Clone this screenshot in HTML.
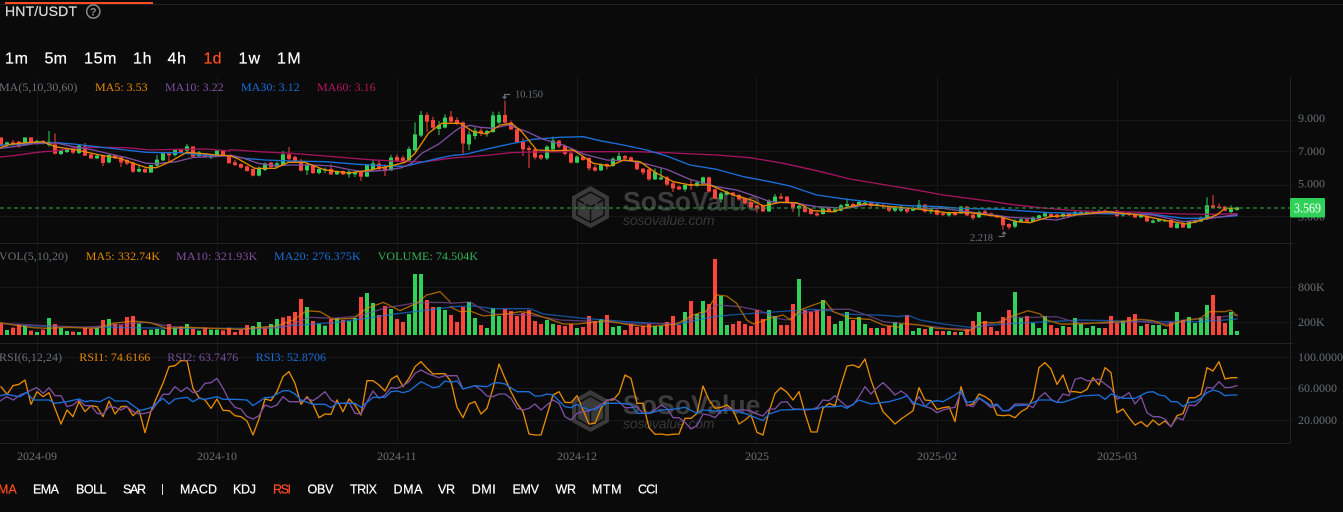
<!DOCTYPE html>
<html lang="en"><head><meta charset="utf-8"><title>HNT/USDT</title>
<style>
html,body{margin:0;padding:0;background:#0a0a0a;width:1343px;height:512px;overflow:hidden}
svg{display:block}
.s{font-family:"Liberation Serif",serif;font-size:12px}
.a{fill:#6b6f77}
.h{font-family:"Liberation Sans",sans-serif;fill:#fff;stroke:#fff;stroke-width:.2}
.tf{font-size:16px}
.ind{font-size:12.5px}
.l{fill:none;stroke-width:4;stroke-linejoin:round;stroke-linecap:round}
.o{stroke:#e68a00}.p{stroke:#7e4fa0}.b{stroke:#1a6fd8}.c{stroke:#a3145e}
.rb{fill:none;stroke:#ff453a;stroke-width:12}
.rw{fill:none;stroke:#ff453a;stroke-width:3}
.gb{fill:none;stroke:#30d158;stroke-width:12}
.gw{fill:none;stroke:#30d158;stroke-width:3}
</style></head><body>
<svg width="1343" height="512" viewBox="0 0 1343 512" xmlns="http://www.w3.org/2000/svg">
<rect width="1343" height="512" fill="#0a0a0a"/>
<!-- top -->
<rect x="0" y="4" width="1343" height="1" fill="#222"/>
<rect x="5" y="2" width="148" height="2" fill="#ff4c1f"/>
<text class="h" x="5" y="16" font-size="14" textLength="72" style="fill:#ddd;stroke:#ddd">HNT/USDT</text>
<circle cx="93.3" cy="11.5" r="6.6" fill="none" stroke="#8a8a8a" stroke-width="1.5"/>
<text x="93.3" y="15.5" text-anchor="middle" font-family="Liberation Sans,sans-serif" font-size="11" font-weight="bold" fill="#8a8a8a">?</text>
<!-- timeframes -->
<g class="h tf">
<text x="5" y="63.5" textLength="23">1m</text>
<text x="44.5" y="63.5" textLength="22.5">5m</text>
<text x="84" y="63.5" textLength="32.5">15m</text>
<text x="133" y="63.5" textLength="18.5">1h</text>
<text x="167.5" y="63.5" textLength="18.5">4h</text>
<text x="203.5" y="63.5" textLength="18" style="fill:#ff4c1f;stroke:#ff4c1f">1d</text>
<text x="238.5" y="63.5" textLength="21.5">1w</text>
<text x="277" y="63.5" textLength="23.7">1M</text>
</g>
<!-- grid -->
<g fill="none" stroke="#171717" stroke-width="1">
<path d="M0 120.5H1293M0 151.5H1293M0 185.5H1293M0 216.5H1293M0 287.5H1293M0 322.5H1293M0 357.5H1293M0 388.5H1293M0 420.5H1293"/>
<path d="M37.5 77V443M217.5 77V443M397.5 77V443M577.5 77V443M756.5 77V443M937.5 77V443M1117.5 77V443"/>
</g>
<g fill="none" stroke="#232323" stroke-width="1">
<path d="M0 243.5H1293M0 343.5H1293M0 443.5H1290M1290.5 77V443"/>
</g>
<!-- watermarks -->
<g id="wm">
<path d="M590.5 186L609 196.5V218L590.5 228L572 218V196.5Z" fill="#3a3a3a"/>
<path d="M577 199.5L590.5 192L604 199.5V215L590.5 222.5L577 215ZM577 199.5L590.5 207L604 199.5M590.5 207V222.5" fill="none" stroke="#0f0f0f" stroke-width="1.6"/>
<path d="M584 204L591 200L597 203.5M596 210V203M584 204V213L590 216.5" fill="none" stroke="#3a3a3a" stroke-width="2"/>
<text x="623" y="210.5" font-family="Liberation Sans,sans-serif" font-size="26.6" font-weight="bold" fill="#3c3c3c">SoSoValue</text>
<text x="623" y="225" font-family="Liberation Sans,sans-serif" font-size="14" font-style="italic" fill="#383838" textLength="91.5">sosovalue.com</text>
</g>
<g>
<path d="M590.5 390L609 400.5V422L590.5 432L572 422V400.5Z" fill="#3a3a3a"/>
<path d="M577 403.5L590.5 396L604 403.5V419L590.5 426.5L577 419ZM577 403.5L590.5 411L604 403.5M590.5 411V426.5" fill="none" stroke="#0f0f0f" stroke-width="1.6"/>
<path d="M584 408L591 404L597 407.5M596 414V407M584 408V417L590 420.5" fill="none" stroke="#3a3a3a" stroke-width="2"/>
<text x="623" y="414" font-family="Liberation Sans,sans-serif" font-size="26.6" font-weight="bold" fill="#3c3c3c">SoSoValue</text>
<text x="623" y="428.5" font-family="Liberation Sans,sans-serif" font-size="14" font-style="italic" fill="#383838" textLength="91.5">sosovalue.com</text>
</g>

<g transform="scale(.333333)">
<!-- CANDLES A -->
<g transform="translate(0,315)">
<path class="rw" d="M39 105V122M57 108V128M129 105V118M165 85V148M219 130V147M255 114V153M273 146V162M309 150V183M345 150V162M363 155V186M381 163V180M399 170V204M435 188V204M507 144V170M543 132V144M615 148V158"/>
<path class="gw" d="M21 110V128M111 105V118M147 78V125M183 135V150M201 128V144M237 118V147M291 148V162M327 148V175M417 180V202M471 150V184M489 142V168M525 132V155M561 117V140M597 138V156M633 148V162"/>
<path class="rb" d="M3 97V120M39 112V120M57 110V125M93 97V115M129 108V115M165 118V146M219 133V143M255 124V152M273 148V160M309 152V174M345 152V160M363 157V172M381 165V176M399 172V200M435 192V202M507 146V151M543 133V141M579 124V155M615 150V154M669 137V153M687 152V175"/>
<path class="gb" d="M21 112V122M75 97V122M111 108V115M147 110V120M183 137V147M201 132V141M237 122V144M291 152V160M327 150V172M417 192V200M453 180V203M471 164V182M489 145V166M525 135V150M561 124V137M597 142V153M633 150V158M651 137V155"/>
</g>
<!-- CANDLES B -->
<g transform="translate(675,315)">
<path class="rw" d="M30 165V183M48 175V190M66 182V200M84 190V214M138 170V190M192 126V165M210 152V172M228 162V199M264 178V207M318 178V210M354 196V210M408 198V228M462 165V196M480 178V213M516 148V170M534 152V172M606 22V80M624 35V72"/>
<path class="gw" d="M102 184V214M120 172V198M156 170V190M174 138V182M246 172V210M282 188V208M300 188V204M336 196V210M372 196V218M390 198V216M426 178V216M444 166V200M498 150V198M552 125V168M570 52V140M588 18V96M642 48V90M660 28V70"/>
<path class="rb" d="M30 172V180M48 177V188M66 184V198M84 192V212M138 173V186M192 148V162M210 156V168M228 170V197M264 182V204M318 192V208M354 198V208M408 200V215M462 176V192M480 186V198M516 156V168M534 158V168M606 30V50M624 45V68"/>
<path class="gb" d="M102 192V212M120 175V195M156 175V186M174 148V180M246 180V196M282 192V204M300 192V197M336 198V208M372 200V208M390 202V208M426 180V215M444 175V192M498 158V196M552 132V166M570 88V136M588 30V92M642 60V72M660 38V68"/>
</g>
<!-- CANDLES C -->
<g transform="translate(1350,240)">
<path class="rw" d="M3 93V127M21 112V136M39 125V220M93 145V168M165 62V130M183 122V150M201 146V190M219 175V228M237 198V264M255 205V238M273 222V240M327 180V205M345 194V226M363 215V250M399 226V242M417 232V272M435 255V274M471 250V268M525 225V242M543 230V246M561 242V270M579 264V285M597 266V302M651 288V318M669 306V336M687 316V330M723 300V330M777 290V338M795 326V358M849 336V348M867 342V362M885 352V374M903 364V386M921 374V398M939 374V396M993 340V358M1011 348V370M1029 366V396M1065 376V398M1083 386V404M1101 396V410M1137 382V398M1209 368V383M1263 366V382M1299 372V384M1317 378V396"/>
<path class="gw" d="M57 152V210M75 142V178M111 150V170M129 95V158M147 95V132M291 196V240M309 170V212M381 226V250M453 250V273M489 232V260M507 218V243M615 266V300M633 266V300M705 310V335M741 302V320M759 290V316M813 336V368M831 332V346M957 358V396M975 342V368M1047 374V410M1119 382V404M1155 384V398M1173 372V394M1191 355V382M1227 362V376M1245 360V378M1281 366V380M1335 378V396"/>
<path class="rb" d="M3 110V125M21 120V132M39 127V190M93 152V160M165 105V128M183 128V148M201 148V187M219 186V208M237 204V210M255 208V232M273 225V235M327 182V200M345 198V222M363 220V248M399 230V240M417 234V265M435 262V272M471 252V260M525 228V236M543 232V243M561 244V268M579 266V278M597 268V298M651 292V314M669 310V325M687 320V328M723 312V318M777 292V335M795 328V356M849 338V346M867 345V358M885 355V370M903 366V382M921 376V386M939 376V394M993 350V356M1011 350V368M1029 368V386M1065 380V396M1083 388V402M1101 400V406M1137 386V396M1209 372V380M1263 368V378M1299 376V380M1317 380V392"/>
<path class="gb" d="M57 163V193M75 152V168M111 153V160M129 106V156M147 105V128M291 200V235M309 182V208M381 230V248M453 253V271M489 236V258M507 228V240M615 276V298M633 292V298M705 315V328M741 308V318M759 292V312M813 340V358M831 336V344M957 362V394M975 350V366M1047 378V386M1119 386V402M1155 388V396M1173 376V392M1191 372V378M1227 366V374M1245 368V374M1281 372V378M1335 384V392"/>
</g>
<!-- CANDLES D -->
<g transform="translate(2700,300)">
<path class="rw" d="M21 322V340M75 312V338M111 328V346M129 338V348M165 334V348M201 318V348M219 342V360M255 330V344M273 338V350M291 344V354M309 350V390M327 370V388M381 356V368M453 340V352M471 342V354M507 338V352M615 328V342M633 332V342M651 330V352M687 336V348M705 340V354M741 346V366M813 358V384M849 368V384M939 285V324M957 310V326M975 318V334"/>
<path class="gw" d="M3 318V336M39 320V334M57 300V328M93 325V342M147 335V350M183 318V342M237 332V354M345 358V384M363 356V368M399 350V368M417 344V356M435 336V351M489 340V352M525 330V348M543 332V346M561 333V342M579 331V340M597 330V339M669 336V350M723 342V354M759 358V370M777 356V366M795 358V366M831 368V386M867 362V386M885 358V370M903 350V366M921 292V360M993 316V344M1011 320V332"/>
<path class="rb" d="M21 325V335M75 314V335M111 330V344M129 340V345M165 336V345M201 320V346M219 344V354M255 334V342M273 340V348M291 346V352M309 352V376M327 372V382M381 358V365M453 342V350M471 344V352M507 340V350M615 332V340M633 334V340M651 332V348M687 338V345M705 342V352M741 350V364M813 360V382M849 370V382M939 316V322M957 320V324M975 320V332"/>
<path class="gb" d="M3 322V332M39 325V332M57 314V324M93 328V335M147 338V346M183 320V340M237 336V352M345 362V380M363 358V365M399 352V365M417 346V354M435 340V349M489 342V350M525 336V346M543 336V342M561 335V340M579 333V338M597 332V337M669 340V346M723 344V352M759 362V368M777 358V364M795 360V364M831 370V384M867 364V384M885 360V368M903 352V364M921 316V358M993 326V336M1011 322V330"/>
</g>
<!-- MA LINES -->
<g transform="translate(0,315)">
<polyline class="l c" points="0,156 40,152 90,145 130,140 165,138 215,130 270,127 380,128 450,135 540,133 620,132 690,138"/>
<polyline class="l b" points="0,121 50,118 100,115 170,113 220,117 280,124 350,132 440,142 490,143 540,143 600,150 690,152"/>
<polyline class="l p" points="0,130 50,124 100,116 170,114 220,125 280,135 330,147 380,158 440,175 470,176 530,170 580,157 640,155 690,152"/>
<polyline class="l o" points="0,128 30,118 80,113 130,110 165,125 230,135 300,150 360,160 400,175 440,188 470,188 510,170 560,142 600,145 650,150 690,152"/>
</g>
<g transform="translate(675,315)">
<polyline class="l c" points="15,134 30,135 100,140 200,145 300,153 420,163 500,168 560,170 600,170 690,158"/>
<polyline class="l b" points="15,153 60,160 120,165 200,168 300,170 400,178 480,182 540,184 590,172 640,160 690,150"/>
<polyline class="l p" points="15,150 50,158 100,175 150,182 200,180 260,180 320,183 380,195 420,200 480,196 530,188 560,175 590,145 640,118 690,78"/>
<polyline class="l o" points="15,152 40,162 90,190 150,190 190,172 240,172 300,195 370,204 430,196 500,182 540,172 570,145 610,85 650,55 690,55"/>
</g>
<g transform="translate(1350,240)">
<polyline class="l c" points="15,233 60,230 120,225 180,218 250,216 400,215 560,215 650,218 800,225 900,233 1000,250 1100,272 1200,297 1350,322"/>
<polyline class="l b" points="15,226 50,222 120,205 180,192 250,178 330,172 400,170 450,182 520,195 590,210 650,228 720,255 800,268 880,290 960,305 1020,318 1100,345 1190,358 1280,368 1350,375"/>
<polyline class="l p" points="15,153 30,143 60,136 90,142 130,145 175,135 230,155 280,178 340,195 400,222 470,240 540,243 590,252 650,268 720,298 800,320 860,330 920,350 960,365 1040,370 1100,380 1190,385 1260,372 1350,385"/>
<polyline class="l o" points="15,129 30,130 70,155 110,162 150,135 185,130 215,155 260,210 310,212 370,210 430,250 480,258 520,240 570,245 620,280 670,305 720,315 780,315 850,345 910,362 940,378 990,367 1040,368 1090,392 1150,395 1190,382 1240,372 1300,378 1350,382"/>
</g>
<g transform="translate(2700,300)">
<polyline class="l c" points="0,262 60,272 130,285 190,293 260,302 340,314 420,323 500,330 580,335 650,335 720,337 780,340 850,342 920,343 1011,341"/>
<polyline class="l b" points="0,316 120,320 180,325 300,328 450,338 560,340 650,342 750,342 850,355 900,355 950,352 1011,347"/>
<polyline class="l p" points="0,325 60,325 130,325 200,335 260,342 330,352 390,355 470,360 530,345 620,338 700,342 760,345 850,365 900,360 950,352 1011,344"/>
<polyline class="l o" points="0,322 60,328 140,338 210,338 300,350 350,365 390,368 450,350 520,345 620,335 720,345 800,362 860,372 900,362 950,345 975,325 1011,325"/>
</g>

<!-- VOLUME -->
<g transform="translate(0,720)">
<path class="rb" d="M3 250V285M39 263V285M57 254V285M93 272V285M129 269V285M165 252V285M219 275V285M255 263V285M273 266V285M309 240V285M345 252V285M363 256V285M381 231V285M399 228V285M435 270V285M507 252V285M543 260V285M579 266V285M615 263V285M669 271V285M687 263V285M705 276V285M723 269V285M741 255V285M795 263V285M849 232V285M867 228V285M885 216V285M903 177V285M939 243V285M993 237V285M1029 240V285M1083 171V285M1137 225V285M1155 198V285M1191 237V285M1209 246V285M1281 180V285M1299 201V285M1353 225V285M1371 246V285M1389 201V285M1443 255V285M1515 207V285M1533 213V285M1551 228V285M1569 219V285M1587 210V285M1605 243V285M1623 252V285M1677 255V285M1695 258V285M1713 252V285M1749 261V285M1767 228V285M1785 243V285M1821 225V285M1875 270V285M1893 252V285M1911 261V285M1929 258V285M1947 252V285M2001 246V285M2019 228V285M2037 255V285M2073 183V285M2127 192V285M2145 57V285M2199 252V285M2217 243V285M2235 252V285M2253 258V285M2271 210V285M2289 237V285M2343 255V285M2361 255V285M2379 192V285M2415 210V285M2433 216V285M2451 210V285M2487 228V285M2559 240V285M2613 264V285M2649 264V285M2667 258V285M2721 225V285M2775 267V285M2811 273V285M2829 273V285M2865 276V285M2901 267V285M2919 243V285M2955 243V285M2973 261V285M2991 273V285M3009 231V285M3027 210V285M3081 228V285M3153 255V285M3171 264V285M3207 261V285M3315 264V285M3333 228V285M3351 249V285M3387 231V285M3405 222V285M3441 252V285M3513 246V285M3549 240V285M3639 165V285M3657 228V285M3675 249V285"/>
<path class="gb" d="M21 270V285M75 257V285M111 276V285M147 234V285M183 264V285M201 273V285M237 276V285M291 263V285M327 237V285M417 251V285M453 269V285M471 267V285M489 269V285M525 263V285M561 252V285M597 272V285M633 269V285M651 269V285M759 258V285M777 246V285M813 252V285M831 237V285M921 201V285M957 251V285M975 257V285M1011 234V285M1047 243V285M1065 234V285M1101 159V285M1119 189V285M1173 207V285M1227 222V285M1245 102V285M1263 102V285M1317 201V285M1335 210V285M1407 186V285M1425 234V285M1461 264V285M1479 204V285M1497 228V285M1641 240V285M1659 252V285M1731 264V285M1803 237V285M1839 261V285M1857 258V285M1965 258V285M1983 258V285M2055 216V285M2091 222V285M2109 183V285M2163 168V285M2181 255V285M2307 210V285M2325 228V285M2397 117V285M2469 180V285M2505 252V285M2523 243V285M2541 216V285M2577 231V285M2595 252V285M2631 264V285M2685 246V285M2703 252V285M2739 273V285M2757 264V285M2793 261V285M2847 273V285M2883 276V285M2937 216V285M3045 156V285M3063 234V285M3099 249V285M3117 264V285M3135 228V285M3189 258V285M3225 234V285M3243 252V285M3261 264V285M3279 258V285M3297 264V285M3369 243V285M3423 258V285M3459 255V285M3477 255V285M3495 267V285M3531 216V285M3567 231V285M3585 249V285M3603 234V285M3621 195V285M3693 216V285M3711 273V285"/>
</g>
<g opacity=".7">
<g transform="translate(0,720)">
<polyline class="l b" points="0,250 100,258 300,262 520,265 740,265 860,258 1000,248 1100,235 1200,220 1350,202"/>
<polyline class="l p" points="0,250 100,255 250,262 350,255 440,247 520,260 640,265 740,268 850,262 930,232 1000,235 1080,228 1150,205 1240,190 1290,187 1350,188"/>
<polyline class="l o" points="0,248 40,255 100,263 140,265 200,262 290,265 340,250 400,243 450,248 500,265 560,262 640,265 720,268 780,262 830,258 880,240 920,212 960,215 1000,238 1060,235 1100,205 1150,187 1200,212 1250,190 1280,165 1320,155 1350,185"/>
</g>
<g transform="translate(1350,720)">
<polyline class="l b" points="0,200 70,198 130,206 240,206 280,222 400,235 530,245 680,254 780,232 840,225 970,216 1090,208 1140,212 1170,222 1300,226 1350,230"/>
<polyline class="l p" points="0,190 60,186 100,210 130,222 240,225 330,240 450,245 560,252 680,250 750,228 800,195 870,200 930,212 980,235 1010,240 1050,220 1130,208 1200,208 1250,225 1300,245 1350,250"/>
<polyline class="l o" points="0,200 30,215 60,213 100,228 170,222 210,215 240,218 300,238 340,252 380,252 420,248 470,242 540,255 600,260 680,252 730,225 770,212 800,165 830,168 860,190 890,240 910,252 960,235 1000,225 1020,240 1050,210 1090,195 1125,183 1150,215 1200,235 1260,238 1300,255 1350,262"/>
</g>
<g transform="translate(2700,720)">
<polyline class="l b" points="0,228 30,228 60,240 130,252 210,262 280,255 340,250 450,245 540,240 680,243 800,245 900,245 1011,237"/>
<polyline class="l p" points="0,250 60,255 140,265 210,268 280,250 340,232 400,232 470,230 530,248 620,250 720,245 800,252 850,240 930,235 1011,225"/>
<polyline class="l o" points="0,250 60,255 110,265 160,268 210,272 240,248 300,248 330,230 385,212 420,222 440,240 480,252 540,252 600,248 660,245 720,238 760,242 800,258 860,240 900,235 930,215 975,215 992,210 1011,228"/>
</g>
</g>

<!-- RSI -->
<g transform="translate(0,1035)">
<polyline class="l o" points="3,125 21,148 39,122 57,118 75,105 93,178 111,140 129,155 147,143 165,190 183,237 201,195 219,215 237,170 255,200 273,182 291,185 309,215 327,168 345,207 363,185 381,184 399,212 417,195 435,263 453,198 471,155 489,115 507,65 525,62 543,47 561,47 579,130 597,158 615,165 633,190 651,162 669,196 687,197 705,212 723,215 741,228 759,270 777,222 795,162 813,167 831,140 849,95 867,80 885,115 903,178 921,155 939,178 957,218 975,207 993,208 1011,165 1029,200 1047,162 1065,180 1083,210 1101,107 1119,107 1137,120 1155,138 1173,103 1191,92 1209,125 1227,100 1245,65 1263,50 1281,70 1299,87 1317,86 1335,86 1353,110"/>
<polyline class="l p" points="0,168 20,155 40,165 60,150 80,142 110,128 130,145 147,128 165,152 183,152 201,185 219,180 237,165 255,182 273,182 291,205 309,208 327,185 345,187 363,195 381,185 399,200 417,207 435,205 453,200 471,175 489,148 507,148 525,125 543,140 561,127 579,143 597,138 615,115 633,113 651,100 669,130 687,165 705,187 723,192 741,215 759,222 777,212 795,180 813,187 831,180 849,155 867,170 885,170 903,170 921,160 939,167 957,155 975,140 993,165 1011,175 1029,175 1047,172 1065,205 1083,207 1101,170 1119,138 1137,160 1155,150 1173,128 1191,130 1209,122 1227,110 1245,85 1263,75 1281,85 1299,92 1317,98 1335,92 1353,92"/>
<polyline class="l b" points="0,152 20,148 40,152 60,155 80,142 100,165 147,165 165,175 200,170 237,162 255,170 273,167 300,170 327,156 345,168 381,168 400,182 420,197 453,188 489,160 507,177 525,162 561,157 579,170 597,160 615,163 651,155 669,163 705,163 741,165 759,182 795,158 813,157 849,137 867,137 885,147 903,165 939,178 975,178 993,188 1011,175 1065,175 1083,187 1119,157 1155,157 1173,140 1191,138 1209,143 1227,138 1263,110 1299,128 1317,125 1335,108 1353,112"/>
</g>
<g transform="translate(1350,1035)">
<polyline class="l o" points="3,110 21,187 39,218 57,177 75,170 93,207 111,190 129,130 147,57 165,100 183,140 201,175 219,200 237,267 255,270 273,270 291,210 309,150 327,140 345,172 363,173 381,152 399,195 417,237 435,235 453,190 471,165 489,165 507,145 525,90 543,100 561,175 579,175 597,248 615,268 633,267 651,270 669,268 687,267 705,220 723,220 741,205 759,123 777,165 795,190 813,187 831,180 849,195 867,237 885,225 903,210 921,262 939,270 957,200 975,145 993,128 1011,142 1029,165 1047,140 1065,205 1083,261 1101,261 1119,190 1137,175 1155,182 1173,120 1191,63 1209,60 1227,68 1245,42 1263,105 1281,155 1299,200 1317,218 1335,237 1353,222"/>
<polyline class="l p" points="3,92 21,92 39,132 57,127 75,122 93,135 111,153 129,155 147,147 165,147 183,160 201,190 219,195 237,190 255,177 273,195 291,180 309,165 327,175 345,215 363,225 381,205 399,200 417,198 435,190 453,178 471,167 489,160 507,170 525,188 543,188 561,185 579,205 597,205 615,195 633,180 651,190 669,218 687,218 705,232 723,252 741,242 759,207 777,210 795,218 813,198 831,188 849,195 867,195 885,195 903,198 921,207 939,213 957,192 975,192 993,172 1011,170 1029,192 1047,192 1065,195 1083,193 1101,188 1119,165 1137,167 1155,152 1173,170 1191,185 1209,180 1227,155 1245,125 1263,147 1281,128 1299,113 1317,130 1335,150 1353,138"/>
<polyline class="l b" points="3,112 21,108 39,132 75,122 111,125 129,115 147,113 165,117 201,140 237,140 255,153 273,153 291,147 309,150 345,185 363,188 381,178 417,195 435,193 471,175 507,175 543,178 561,205 597,205 633,195 669,193 705,187 741,205 759,195 795,198 849,195 885,205 939,227 957,207 993,195 1065,193 1101,192 1119,185 1155,185 1173,182 1191,190 1227,165 1263,177 1317,170 1353,160"/>
</g>
<g transform="translate(2700,1035)">
<polyline class="l o" points="3,222 21,210 39,197 57,128 75,165 93,167 111,193 129,188 147,185 165,230 183,125 201,182 219,177 237,147 255,155 273,167 291,210 309,212 327,210 345,218 363,200 381,190 399,160 417,68 435,53 453,72 471,118 489,90 507,140 525,140 543,143 561,133 579,98 597,120 615,68 633,83 651,203 669,192 687,218 705,240 723,230 741,245 759,225 777,240 795,228 813,245 831,212 849,206 867,158 885,158 903,148 921,68 939,78 957,50 975,102 993,98 1011,98"/>
<polyline class="l p" points="3,138 21,150 39,178 57,155 75,185 93,190 111,203 129,195 147,190 165,187 183,140 201,180 219,185 237,160 255,172 273,188 291,180 309,198 327,195 345,177 363,177 381,178 399,188 417,158 435,143 453,163 471,172 489,147 507,152 525,103 543,98 561,107 579,107 597,102 615,117 633,130 651,162 669,155 687,143 705,177 723,155 741,203 759,215 777,215 795,222 813,245 831,218 849,225 867,180 885,182 903,165 921,127 939,130 957,110 975,128 993,127 1011,122"/>
<polyline class="l b" points="3,160 21,152 39,172 75,185 93,170 111,167 129,170 165,150 183,137 201,172 219,170 237,158 273,182 291,177 309,197 327,197 345,182 381,180 417,165 453,165 471,172 489,172 525,160 543,153 597,150 615,163 633,147 669,160 705,160 741,142 759,140 777,150 795,153 813,170 831,170 849,185 867,172 885,170 903,160 921,143 939,135 957,140 975,152 993,150 1011,150"/>
</g>
</g>

<!-- price line -->
<path d="M0 208H1290" stroke="#2a8a40" stroke-width="1.2" stroke-dasharray="4 3" fill="none"/>
<!-- annotations -->
<path d="M510 94.5H504.5V98.5M502.5 96.5L504.5 98.5L506.5 96.5" fill="none" stroke="#6b6f77" stroke-width="1.2"/>
<text class="s a" x="515" y="97.5" style="font-size:10.5px" textLength="28">10.150</text>
<path d="M998.5 236.5H1004V232M1002 234L1004 232L1006 234" fill="none" stroke="#6b6f77" stroke-width="1.2"/>
<text class="s a" x="970" y="241" style="font-size:10.5px" textLength="23">2.218</text>

<!-- legends -->
<g class="s">
<text class="a" x="-1" y="91">MA(5,10,30,60)</text>
<text x="95" y="91" fill="#e68a00">MA5: 3.53</text>
<text x="165" y="91" fill="#7e4fa0">MA10: 3.22</text>
<text x="241" y="91" fill="#1a6fd8">MA30: 3.12</text>
<text x="317" y="91" fill="#b7195e">MA60: 3.16</text>
<text class="a" x="-1" y="260" textLength="69">VOL(5,10,20)</text>
<text x="85.7" y="260" fill="#e68a00" textLength="74.3">MA5: 332.74K</text>
<text x="176" y="260" fill="#7e4fa0" textLength="81.3">MA10: 321.93K</text>
<text x="274" y="260" fill="#1a6fd8" textLength="86.7">MA20: 276.375K</text>
<text x="377.7" y="260" fill="#30b455" textLength="100.3">VOLUME: 74.504K</text>
<text class="a" x="-1" y="361" textLength="63">RSI(6,12,24)</text>
<text x="79.3" y="361" fill="#e68a00" textLength="71">RSI1: 74.6166</text>
<text x="167.3" y="361" fill="#7e4fa0" textLength="71">RSI2: 63.7476</text>
<text x="255.7" y="361" fill="#1a6fd8" textLength="70.3">RSI3: 52.8706</text>
</g>
<!-- y axis -->
<g class="s a">
<text x="1298" y="122">9.000</text>
<text x="1298" y="155">7.000</text>
<text x="1298" y="187.5">5.000</text>
<text x="1298" y="220.5">3.000</text>
<text x="1298" y="291">800K</text>
<text x="1298" y="326">200K</text>
<text x="1298" y="361">100.0000</text>
<text x="1298" y="392">60.0000</text>
<text x="1298" y="424">20.0000</text>
</g>
<rect x="1290" y="198" width="35" height="19.5" rx="1.5" fill="#30d158"/>
<text class="s" x="1294" y="212.5" fill="#fff" textLength="27" lengthAdjust="spacingAndGlyphs" style="font-size:14px">3.569</text>
<!-- x axis -->
<g class="s a">
<text x="17" y="460">2024-09</text>
<text x="197" y="460">2024-10</text>
<text x="377" y="460">2024-11</text>
<text x="557" y="460">2024-12</text>
<text x="745" y="460">2025</text>
<text x="917" y="460">2025-02</text>
<text x="1097" y="460">2025-03</text>
</g>
<!-- indicators -->
<g class="h ind">
<text x="-2" y="493.5" style="fill:#ff4c1f;stroke:#ff4c1f">MA</text>
<text x="33" y="493.5" textLength="26">EMA</text>
<text x="76" y="493.5" textLength="30.5">BOLL</text>
<text x="123" y="493.5" textLength="23">SAR</text>
<rect x="162" y="484" width="1" height="11" fill="#ddd" stroke="none"/>
<text x="180" y="493.5" textLength="37">MACD</text>
<text x="233" y="493.5" textLength="23">KDJ</text>
<text x="273" y="493.5" textLength="18" style="fill:#ff4c1f;stroke:#ff4c1f">RSI</text>
<text x="307.5" y="493.5" textLength="26">OBV</text>
<text x="350" y="493.5" textLength="27">TRIX</text>
<text x="393.5" y="493.5" textLength="29">DMA</text>
<text x="438" y="493.5" textLength="17">VR</text>
<text x="471.7" y="493.5" textLength="24">DMI</text>
<text x="512.5" y="493.5" textLength="26.5">EMV</text>
<text x="555.5" y="493.5" textLength="20.5">WR</text>
<text x="592" y="493.5" textLength="29.5">MTM</text>
<text x="638" y="493.5" textLength="20">CCI</text>
</g>
</svg>
</body></html>
